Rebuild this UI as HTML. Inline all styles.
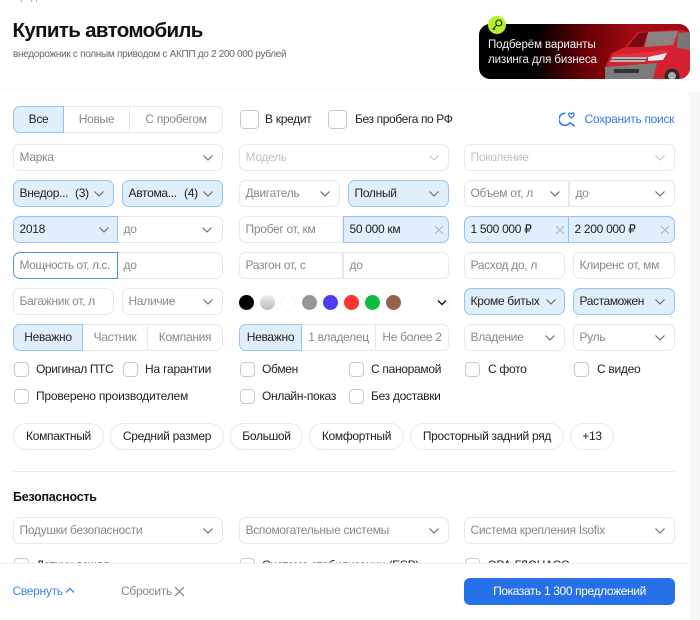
<!DOCTYPE html>
<html lang="ru"><head><meta charset="utf-8"><title>Купить автомобиль</title>
<style>
*{box-sizing:border-box}
html,body{margin:0;padding:0;width:700px;height:620px;overflow:hidden;background:#fff;font-family:"Liberation Sans",sans-serif;color:#222}
.a{position:absolute}
.f{position:absolute;height:27px;border:1px solid #e9e9e9;border-radius:7px;background:#fff;font-size:12px;letter-spacing:-.3px;line-height:25px;padding-left:5.5px;color:#888;white-space:nowrap;overflow:hidden}
.on{background:#e1eefb;border-color:#92c5f6;color:#222}
.dis{color:#c2c2c2}
.l{border-top-right-radius:0;border-bottom-right-radius:0}
.r{border-top-left-radius:0;border-bottom-left-radius:0;border-left:none}
.rb{border-top-left-radius:0;border-bottom-left-radius:0}
.m{border-radius:0;border-left:none}
.c{text-align:center;padding-left:0}
svg.ch{position:absolute;top:9px;width:12px;height:8px;fill:none;stroke:#666;stroke-width:1.1}
.dis svg.ch{stroke:#c2c2c2}
svg.x{position:absolute;top:8px;width:10px;height:10px;fill:none;stroke:#b4b4b4;stroke-width:1.1}
.cb{position:absolute;width:15px;height:15px;border:1px solid #c9c9c9;border-radius:4px;background:#fff}
.t{position:absolute;font-size:12px;letter-spacing:-.3px;line-height:15px;color:#222;white-space:nowrap}
.chip{position:absolute;top:423px;height:27px;border:1px solid #e9e9e9;border-radius:14px;font-size:12px;letter-spacing:-.3px;line-height:25px;text-align:center;color:#222;white-space:nowrap}
.d{position:absolute;top:294.5px;width:15px;height:15px;border-radius:50%}
</style></head><body>
<svg width="0" height="0" style="position:absolute"><defs><symbol id="c" viewBox="0 0 12 8"><path d="M1.5 1.5L6 6l4.5-4.5"/></symbol><symbol id="xx" viewBox="0 0 10 10"><path d="M1 1l8 8M9 1l-8 8"/></symbol></defs></svg>

<div class="a" style="left:13px;top:-9px;font-size:10px;line-height:13px;color:#999;white-space:nowrap">Продажа автомобилей в Москве</div>
<div class="a" style="left:12.5px;top:18px;font-size:20.5px;line-height:26px;font-weight:700;color:#111;letter-spacing:-.65px;white-space:nowrap">Купить автомобиль</div>
<div class="a" style="left:13px;top:48px;font-size:10px;line-height:13px;color:#666;letter-spacing:-.3px;white-space:nowrap">внедорожник с полным приводом с АКПП до 2 200 000 рублей</div>

<!-- banner -->
<div class="a" style="left:479px;top:24px;width:211px;height:55px;border-radius:11px;overflow:hidden;background:linear-gradient(95deg,#000 0,#000 27%,#6e0006 52%,#a20a14 72%,#a00a12 100%)">
<svg width="211" height="55" style="position:absolute;left:0;top:0">
<path d="M126 55L127 41L133 29L146 23L159 8L198 6L211 8V55Z" fill="#d5202f"/>
<path d="M148 23L160 9L169 8L164 23Z" fill="#7a0a12"/>
<path d="M169 8L199 7L194 21L166 23Z" fill="#8a8384"/>
<path d="M199 9L211 8V26L198 24Z" fill="#777"/>
<path d="M135 31L190 26L184 33L134 35Z" fill="#e2303e"/>
<path d="M169 33L188 29L184 36L169 37Z" fill="#e9eef2"/>
<path d="M133 33L168 33L166 38L131 38Z" fill="#b9b4b4"/>
<path d="M131 35.5H167" stroke="#555" stroke-width="1"/>
<path d="M126 43L178 39L174 55L126 55Z" fill="#7c7a7a"/>
<path d="M135 45H160V49H135Z" fill="#333"/>
<circle cx="193" cy="52" r="7.5" fill="#2a2a2a"/>
<circle cx="193" cy="52" r="4" fill="#aaa"/>
</svg>
<div class="a" style="left:9px;top:14px;font-size:11.5px;line-height:15px;color:#f2f2f2;letter-spacing:-.1px;white-space:nowrap">Подберём варианты<br>лизинга для бизнеса</div>
</div>
<div class="a" style="left:488px;top:16px;width:18px;height:18px;border-radius:50%;background:#b5f02c">
<svg width="18" height="18" viewBox="0 0 18 18" fill="none" stroke="#222" stroke-width="1.1"><circle cx="10.8" cy="7" r="3"/><path d="M8.6 9.2L4.5 13.6M5.8 12.2L7.2 13.6"/></svg>
</div>

<!-- card -->
<div class="a" style="left:0;top:91px;width:689px;height:529px;background:#fff;border-top-right-radius:7px;box-shadow:0 -1px 3px rgba(0,0,0,.04)"></div>
<div class="a" style="left:689px;top:92px;width:11px;height:528px;background:#f8f8f8"></div>

<!-- row 1 -->
<div class="f on c l" style="left:13px;top:106px;width:51px;">Все</div>
<div class="f c m" style="left:64px;top:106px;width:66px;border-right:1px solid #e9e9e9">Новые</div>
<div class="f c r" style="left:130px;top:106px;width:93px">С пробегом</div>
<div class="cb" style="left:240px;top:110px;width:19px;height:19px"></div><div class="t" style="left:265px;top:112px">В кредит</div>
<div class="cb" style="left:328px;top:110px;width:19px;height:19px"></div><div class="t" style="left:355px;top:112px;letter-spacing:-.38px">Без пробега по РФ</div>
<svg class="a" style="left:559px;top:111px" width="18" height="17" viewBox="0 0 18 17" fill="none" stroke="#2b7bf0" stroke-width="1.6"><path d="M6.5 2.3A6 6 0 1 0 10.8 11.8L15.8 15.2"/><path d="M9.6 3.6Q9.6 2 11 2Q12 2 12.4 3Q12.8 2 13.8 2Q15.2 2 15.2 3.6Q15.2 5 12.4 7Q9.6 5 9.6 3.6Z" stroke-width="1.2"/></svg>
<div class="t" style="left:584.5px;top:112px;color:#2f7cf0">Сохранить поиск</div>

<!-- row 2 -->
<div class="f" style="left:13px;top:144px;width:210px">Марка<svg class="ch" style="left:188px"><use href="#c"/></svg></div>
<div class="f dis" style="left:239px;top:144px;width:210px">Модель<svg class="ch" style="left:188px"><use href="#c"/></svg></div>
<div class="f dis" style="left:464px;top:144px;width:211px">Поколение<svg class="ch" style="left:189px"><use href="#c"/></svg></div>

<!-- row 3 -->
<div class="f on" style="left:13px;top:180px;width:101px;border-radius:7px">Внедор...<span class="a" style="left:61px">(3)</span><svg class="ch" style="left:79px"><use href="#c"/></svg></div>
<div class="f on" style="left:122px;top:180px;width:101px">Автома...<span class="a" style="left:61px">(4)</span><svg class="ch" style="left:79px"><use href="#c"/></svg></div>
<div class="f" style="left:239px;top:180px;width:101px">Двигатель<svg class="ch" style="left:79px"><use href="#c"/></svg></div>
<div class="f on" style="left:348px;top:180px;width:101px">Полный<svg class="ch" style="left:79px"><use href="#c"/></svg></div>
<div class="f l" style="left:464px;top:180px;width:105px">Объем от, л<svg class="ch" style="left:84px"><use href="#c"/></svg></div>
<div class="f r" style="left:569px;top:180px;width:106px;border-left:1px solid #e9e9e9">до<svg class="ch" style="left:84px"><use href="#c"/></svg></div>

<!-- row 4 -->
<div class="f on l" style="left:13px;top:216px;width:105px">2018<svg class="ch" style="left:84px"><use href="#c"/></svg></div>
<div class="f r" style="left:118px;top:216px;width:105px">до<svg class="ch" style="left:83px"><use href="#c"/></svg></div>
<div class="f l" style="left:239px;top:216px;width:104px">Пробег от, км</div>
<div class="f on rb" style="left:343px;top:216px;width:106px">50 000 км<svg class="x" style="left:90px"><use href="#xx"/></svg></div>
<div class="f on l" style="left:464px;top:216px;width:105px">1 500 000 ₽<svg class="x" style="left:90px"><use href="#xx"/></svg></div>
<div class="f on rb" style="left:568px;top:216px;width:107px">2 200 000 ₽<svg class="x" style="left:91px"><use href="#xx"/></svg></div>

<!-- row 5 -->
<div class="f" style="left:13px;top:252px;width:105px;border-color:#4b90ee;border-radius:7px 0 0 7px;letter-spacing:-.45px">Мощность от, л.с.</div>
<div class="f r" style="left:118px;top:252px;width:105px">до</div>
<div class="f l" style="left:239px;top:252px;width:104px">Разгон от, с</div>
<div class="f rb" style="left:343px;top:252px;width:106px">до</div>
<div class="f" style="left:464px;top:252px;width:101px">Расход до, л</div>
<div class="f" style="left:573px;top:252px;width:102px">Клиренс от, мм</div>

<!-- row 6 -->
<div class="f" style="left:13px;top:288px;width:101px">Багажник от, л</div>
<div class="f" style="left:122px;top:288px;width:101px">Наличие<svg class="ch" style="left:79px"><use href="#c"/></svg></div>
<div class="d" style="left:238.5px;background:#000"></div>
<div class="d" style="left:259.5px;background:linear-gradient(#eee,#bbb)"></div>
<div class="d" style="left:280.5px;background:#fff;border:1px solid #f4f4f4"></div>
<div class="d" style="left:301.5px;background:#969696"></div>
<div class="d" style="left:322.5px;background:#4c3ef0"></div>
<div class="d" style="left:343.5px;background:#f8352e"></div>
<div class="d" style="left:364.5px;background:#0bbd42"></div>
<div class="d" style="left:385.5px;background:#92634a"></div>
<div class="a" style="left:434px;top:294px;width:16px;height:16px;border-radius:50%;background:#fff;box-shadow:0 0 2px rgba(0,0,0,.1)"><svg width="12" height="8" viewBox="0 0 12 8" style="position:absolute;left:2px;top:4.5px" fill="none" stroke="#111" stroke-width="1.4"><path d="M2 1.5L6 5.5l4-4"/></svg></div>
<div class="f on" style="left:464px;top:288px;width:101px">Кроме битых<svg class="ch" style="left:80px"><use href="#c"/></svg></div>
<div class="f on" style="left:573px;top:288px;width:102px;letter-spacing:-.4px">Растаможен<svg class="ch" style="left:80px"><use href="#c"/></svg></div>

<!-- row 7 -->
<div class="f on c l" style="left:13px;top:324px;width:70px">Неважно</div>
<div class="f c m" style="left:83px;top:324px;width:65px;border-right:1px solid #e9e9e9">Частник</div>
<div class="f c r" style="left:148px;top:324px;width:75px">Компания</div>
<div class="f on c l" style="left:239px;top:324px;width:63px">Неважно</div>
<div class="f c m" style="left:302px;top:324px;width:74px;border-right:1px solid #e9e9e9">1 владелец</div>
<div class="f c r" style="left:376px;top:324px;width:73px">Не более 2</div>
<div class="f" style="left:464px;top:324px;width:101px">Владение<svg class="ch" style="left:79px"><use href="#c"/></svg></div>
<div class="f" style="left:573px;top:324px;width:102px">Руль<svg class="ch" style="left:80px"><use href="#c"/></svg></div>

<!-- checks -->
<div class="cb" style="left:14px;top:362px"></div><div class="t" style="left:36px;top:362px;letter-spacing:-.4px">Оригинал ПТС</div>
<div class="cb" style="left:123px;top:362px"></div><div class="t" style="left:145px;top:362px;letter-spacing:-.2px">На гарантии</div>
<div class="cb" style="left:240px;top:362px"></div><div class="t" style="left:262px;top:362px">Обмен</div>
<div class="cb" style="left:349px;top:362px"></div><div class="t" style="left:371px;top:362px">С панорамой</div>
<div class="cb" style="left:465px;top:362px"></div><div class="t" style="left:488px;top:362px">С фото</div>
<div class="cb" style="left:574px;top:362px"></div><div class="t" style="left:597px;top:362px">С видео</div>
<div class="cb" style="left:14px;top:389px"></div><div class="t" style="left:36px;top:389px;letter-spacing:-.2px">Проверено производителем</div>
<div class="cb" style="left:240px;top:389px"></div><div class="t" style="left:262px;top:389px">Онлайн-показ</div>
<div class="cb" style="left:349px;top:389px"></div><div class="t" style="left:371px;top:389px">Без доставки</div>

<!-- chips -->
<div class="chip" style="left:13px;width:91px">Компактный</div>
<div class="chip" style="left:110px;width:114px">Средний размер</div>
<div class="chip" style="left:230px;width:73px">Большой</div>
<div class="chip" style="left:309px;width:95px">Комфортный</div>
<div class="chip" style="left:410px;width:154px">Просторный задний ряд</div>
<div class="chip" style="left:570px;width:44px">+13</div>

<div class="a" style="left:13px;top:471px;width:662px;height:1px;background:#ececec"></div>
<div class="a" style="left:13px;top:490px;font-size:12.5px;line-height:15px;font-weight:700;color:#111;letter-spacing:-.25px">Безопасность</div>
<div class="f" style="left:13px;top:517px;width:210px">Подушки безопасности<svg class="ch" style="left:188px"><use href="#c"/></svg></div>
<div class="f" style="left:239px;top:517px;width:210px">Вспомогательные системы<svg class="ch" style="left:188px"><use href="#c"/></svg></div>
<div class="f" style="left:464px;top:517px;width:211px">Система крепления Isofix<svg class="ch" style="left:189px"><use href="#c"/></svg></div>

<div class="cb" style="left:14px;top:558px"></div><div class="t" style="left:36px;top:558px">Датчик дождя</div>
<div class="cb" style="left:240px;top:558px"></div><div class="t" style="left:262px;top:558px">Система стабилизации (ESP)</div>
<div class="cb" style="left:465px;top:558px"></div><div class="t" style="left:488px;top:558px">ЭРА-ГЛОНАСС</div>

<!-- footer -->
<div class="a" style="left:0;top:563px;width:689px;height:57px;background:#fff;border-top:1px solid #f0f0f0"></div>
<div class="t" style="left:12.5px;top:584px;color:#3d86f2">Свернуть</div>
<svg class="a" style="left:65px;top:587px" width="10" height="7" viewBox="0 0 10 7" fill="none" stroke="#3d86f2" stroke-width="1.3"><path d="M1 5.5L5 1.5l4 4"/></svg>
<div class="t" style="left:121px;top:584px;color:#888">Сбросить</div>
<svg class="a" style="left:174px;top:586px" width="11" height="11" viewBox="0 0 11 11" fill="none" stroke="#777" stroke-width="1.1"><path d="M1 1l9 9M10 1l-9 9"/></svg>
<div class="a" style="left:464px;top:578px;width:211px;height:27px;border-radius:6px;background:#2671e8;color:#fff;font-size:12px;letter-spacing:-.38px;line-height:27px;text-align:center;white-space:nowrap">Показать 1 300 предложений</div>
</body></html>
